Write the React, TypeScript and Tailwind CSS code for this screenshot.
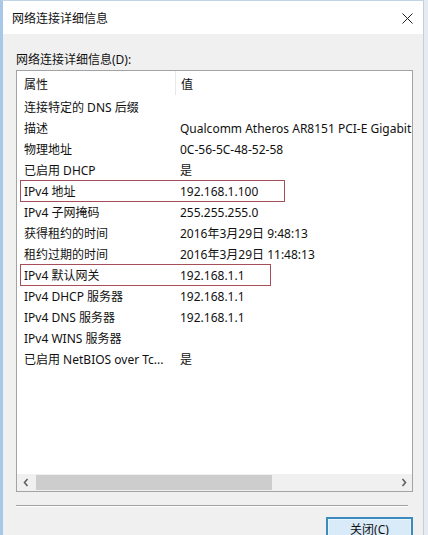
const FONT = '"Noto Sans", "Noto Sans CJK SC", sans-serif'

type Row = { name: string; value: string; mark?: number }

const ROWS: Row[] = [
  { name: '连接特定的 DNS 后缀', value: '' },
  { name: '描述', value: 'Qualcomm Atheros AR8151 PCI-E Gigabit Ethernet Controller (NDIS 6.30)' },
  { name: '物理地址', value: '0C-56-5C-48-52-58' },
  { name: '已启用 DHCP', value: '是' },
  { name: 'IPv4 地址', value: '192.168.1.100', mark: 265 },
  { name: 'IPv4 子网掩码', value: '255.255.255.0' },
  { name: '获得租约的时间', value: '2016年3月29日 9:48:13' },
  { name: '租约过期的时间', value: '2016年3月29日 11:48:13' },
  { name: 'IPv4 默认网关', value: '192.168.1.1', mark: 251 },
  { name: 'IPv4 DHCP 服务器', value: '192.168.1.1' },
  { name: 'IPv4 DNS 服务器', value: '192.168.1.1' },
  { name: 'IPv4 WINS 服务器', value: '' },
  { name: '已启用 NetBIOS over Tc...', value: '是' },
]

function Chevron({ dir }: { dir: 'left' | 'right' }) {
  return (
    <svg width="6" height="9" viewBox="0 0 6 9">
      <path
        d={dir === 'left' ? 'M4.5 1 L1.5 4.5 L4.5 8' : 'M1.5 1 L4.5 4.5 L1.5 8'}
        fill="none"
        stroke="#606060"
        strokeWidth="1.6"
      />
    </svg>
  )
}

export default function App() {
  return (
    <div
      className="flex w-[428px] h-[535px] overflow-hidden bg-[#e4ebf2] text-[12px] text-[#111]"
      style={{ fontFamily: FONT }}
    >
      {/* dialog window */}
      <div className="flex flex-col w-[424px] h-full border-l-[3px] border-l-[#a9c7e6] border-r border-r-[#c9ced4] border-t border-t-[#c3d4e6] bg-[#f0f0f0]">
        {/* title bar */}
        <div className="flex items-center justify-between h-[33px] bg-white pl-[9px] pr-[10px] shrink-0">
          <span className="leading-[16px] pt-[2px]">网络连接详细信息</span>
          <svg width="11" height="11" viewBox="0 0 11 11" className="mt-[2px]">
            <path d="M0.5 0.5 L10.5 10.5 M10.5 0.5 L0.5 10.5" stroke="#222" strokeWidth="1" />
          </svg>
        </div>

        {/* body */}
        <div className="flex flex-col flex-1 pl-[13px] pr-[10px] pt-[18px]">
          <div className="h-[16px] leading-[16px] mb-[2px]">网络连接详细信息(D):</div>

          {/* list view */}
          <div className="flex flex-col w-[397px] h-[422px] border border-[#a3a3a3] bg-white overflow-hidden shrink-0">
            <div className="flex h-[26px] shrink-0">
              <div className="w-[158px] pl-[7px] pt-[6px] leading-[16px]">属性</div>
              <div className="w-px h-[24px] bg-[#e8e8e8]" />
              <div className="pl-[5px] pt-[6px] leading-[16px]">值</div>
            </div>
            <div className="flex flex-col flex-1">
              {ROWS.map((r) => (
                <div key={r.name} className="relative flex h-[21px] items-center whitespace-nowrap">
                  <div className="w-[158px] shrink-0 pl-[7px] overflow-hidden">{r.name}</div>
                  <div className="pl-[5px]">{r.value}</div>
                  {r.mark && (
                    <div
                      className="absolute left-[3px] top-[-1px] h-[22px] border-[1.5px] border-[#a64f5b]"
                      style={{ width: r.mark }}
                    />
                  )}
                </div>
              ))}
            </div>
            {/* horizontal scrollbar */}
            <div className="flex items-center h-[17px] bg-[#f0f0f0] shrink-0">
              <div className="w-[17px] flex justify-center">
                <Chevron dir="left" />
              </div>
              <div className="flex-1 h-full flex items-center">
                <div className="w-[236px] h-[15px] ml-[2px] bg-[#cdcdcd]" />
              </div>
              <div className="w-[17px] flex justify-center">
                <Chevron dir="right" />
              </div>
            </div>
          </div>

          {/* separator */}
          <div className="mt-[13px] w-[392px] h-px bg-[#a0a0a0] shrink-0" />
          <div className="w-[392px] h-px bg-white shrink-0" />

          {/* buttons */}
          <div className="flex justify-end mt-[10px]">
            <button className="w-[87px] h-[24px] border-2 border-[#3b8bbd] bg-[#d9ebf8] shadow-[inset_0_0_0_1px_#eaf4fc] text-[12px] leading-[16px] pt-[2px]">
              关闭(C)
            </button>
          </div>
        </div>
      </div>
    </div>
  )
}
